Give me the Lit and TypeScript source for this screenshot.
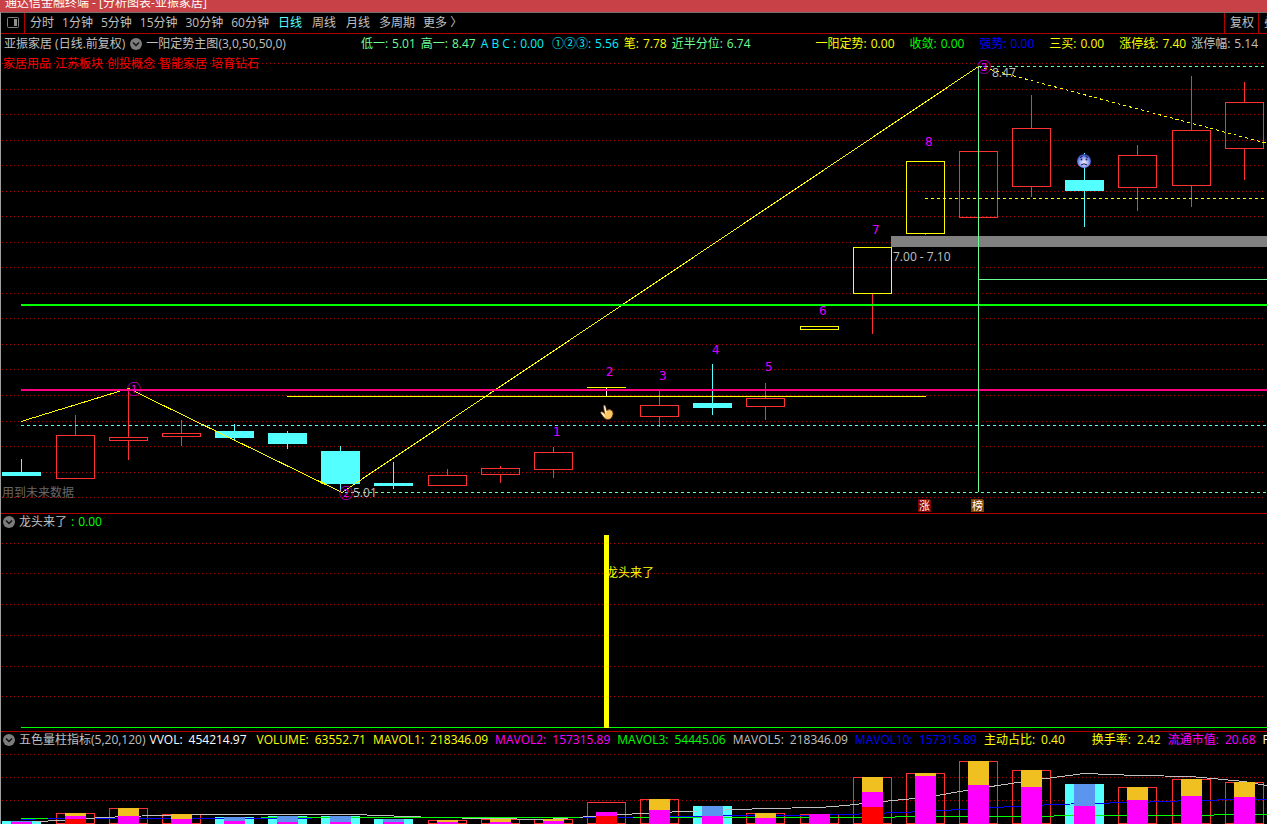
import { LitElement, html, svg, css } from "lit";
import { customElement, property } from "lit/decorators.js";
import { classMap } from "lit/directives/class-map.js";

type Tone = "up" | "down" | "limit";
interface Candle { x: number; tone: Tone; high: number; top: number; bottom: number; low: number; }
interface Volume { x: number; top: number; down?: boolean; mid: number; red?: number; }
interface Field { label: string; value: string; tone: string; gap?: "xs" | "s" | "m" | "l" | "xl"; }

const c = (x: number, tone: Tone, high: number, top: number, bottom: number, low: number): Candle =>
  ({ x, tone, high, top, bottom, low });

const CANDLES: Candle[] = [
  c(21, "down", 459, 472, 476, 476), c(75, "up", 415, 435, 479, 479), c(128, "up", 389, 437, 441, 460),
  c(181, "up", 420, 433, 437, 446), c(234, "down", 424, 431, 438, 440), c(287, "down", 431, 433, 444, 449),
  c(340, "down", 446, 451, 484, 492), c(393, "down", 462, 483, 486, 489), c(447, "up", 469, 475, 486, 486),
  c(500, "up", 466, 468, 475, 483), c(553, "up", 447, 452, 470, 478), c(659, "up", 390, 405, 417, 427),
  c(712, "down", 364, 403, 408, 415), c(765, "up", 383, 398, 407, 420), c(819, "limit", 326, 326, 330, 330),
  c(872, "limit", 247, 247, 294, 334), c(925, "limit", 161, 161, 234, 235), c(978, "up", 151, 151, 218, 218),
  c(1031, "up", 95, 128, 187, 197), c(1084, "down", 153, 180, 191, 227), c(1137, "up", 145, 155, 188, 211),
  c(1191, "up", 76, 130, 186, 207), c(1244, "up", 82, 102, 149, 180),
];

const VOLUMES: Volume[] = [
  { x: 21, top: 821, down: true, mid: 822 }, { x: 75, top: 813, mid: 816, red: 819 },
  { x: 128, top: 808, mid: 816 }, { x: 181, top: 814, mid: 819 },
  { x: 234, top: 817, down: true, mid: 821 }, { x: 287, top: 816, down: true, mid: 822 },
  { x: 340, top: 816, down: true, mid: 822 }, { x: 393, top: 819, down: true, mid: 822 },
  { x: 447, top: 820, mid: 822 }, { x: 500, top: 819, mid: 822 }, { x: 553, top: 819, mid: 821 },
  { x: 606, top: 802, mid: 812, red: 816 }, { x: 659, top: 799, mid: 810 },
  { x: 712, top: 806, down: true, mid: 816 }, { x: 765, top: 813, mid: 818 }, { x: 819, top: 814, mid: 814 },
  { x: 872, top: 777, mid: 792, red: 807 }, { x: 925, top: 773, mid: 776 }, { x: 978, top: 761, mid: 785 },
  { x: 1031, top: 770, mid: 787 }, { x: 1084, top: 784, down: true, mid: 806 }, { x: 1137, top: 787, mid: 800 },
  { x: 1191, top: 779, mid: 796 }, { x: 1244, top: 782, mid: 797 },
];

const MAIN_GRID = [63, 89, 114, 140, 165, 191, 216, 242, 267, 293, 318, 344, 369, 395, 421, 446, 472, 497];
const SIGNAL_GRID = [543, 573, 604, 635, 666, 696];
const VOLUME_GRID = [754, 777, 800];

const COUNTS = [
  [553, 436], [606, 376], [659, 380], [712, 354], [765, 371], [819, 315], [872, 234], [925, 146],
];

const PERIODS = ["分时", "1分钟", "5分钟", "15分钟", "30分钟", "60分钟", "日线", "周线", "月线", "多周期", "更多 〉"];
const TAGS = ["家居用品", "江苏板块", "创投概念", "智能家居", "培育钻石"];

const MAIN_FIELDS: Field[] = [
  { label: "低一:", value: "5.01", tone: "mint", gap: "xl" },
  { label: "高一:", value: "8.47", tone: "mint" },
  { label: "A B C :", value: "0.00", tone: "cyan" },
  { label: "①②③:", value: "5.56", tone: "cyan", gap: "xs" },
  { label: "笔:", value: "7.78", tone: "yellow" },
  { label: "近半分位:", value: "6.74", tone: "mint" },
  { label: "一阳定势:", value: "0.00", tone: "yellow", gap: "l" },
  { label: "收敛:", value: "0.00", tone: "green", gap: "s" },
  { label: "强势:", value: "0.00", tone: "blue", gap: "s" },
  { label: "三买:", value: "0.00", tone: "yellow", gap: "s" },
  { label: "涨停线:", value: "7.40", tone: "yellow", gap: "s" },
  { label: "涨停幅:", value: "5.14", tone: "silver" },
];
const SIGNAL_FIELDS: Field[] = [{ label: ":", value: "0.00", tone: "green" }];
const VOLUME_FIELDS: Field[] = [
  { label: "VVOL:", value: "454214.97", tone: "white" },
  { label: "VOLUME:", value: "63552.71", tone: "yellow", gap: "xs" },
  { label: "MAVOL1:", value: "218346.09", tone: "yellow" },
  { label: "MAVOL2:", value: "157315.89", tone: "magenta" },
  { label: "MAVOL3:", value: "54445.06", tone: "green" },
  { label: "MAVOL5:", value: "218346.09", tone: "silver" },
  { label: "MAVOL10:", value: "157315.89", tone: "blue" },
  { label: "主动占比:", value: "0.40", tone: "yellow" },
  { label: "换手率:", value: "2.42", tone: "yellow", gap: "m" },
  { label: "流通市值:", value: "20.68", tone: "magenta" },
  { label: "PE:", value: "0.00", tone: "white" },
];

const grid = (ys: number[]) =>
  ys.map((y) => svg`<line class="grid" x1="2" x2="100%" y1=${y + 0.5} y2=${y + 0.5} />`);

@customElement("chart-legend")
export class ChartLegend extends LitElement {
  @property() name = "";
  @property() args = "";
  @property({ attribute: false }) fields: Field[] = [];
  @property({ type: Boolean }) stock = false;

  static styles = css`
    :host { display: flex; align-items: center; gap: 4px; height: 16px; padding-left: 2px; overflow: hidden; white-space: nowrap; color: #c0c0c0; }
    :host([stock]) { height: 19px; }
    span { flex: none; }
    button { flex: none; display: block; width: 12px; height: 12px; padding: 0; border: 0; background: none; }
    svg { display: block; }
    .stock { padding: 0 1px; }
    .fields { display: flex; gap: 5px; }
    .field { display: flex; gap: 4px; }
    :host([loose]) .fields { gap: 7px; }
    :host([loose]) .field { gap: 6px; }
    .mint { color: #69ff96; }
    .cyan { color: #00f0ff; }
    .yellow { color: #ff0; }
    .green { color: #0f0; }
    .blue { color: #00f; }
    .magenta { color: #f0f; }
    .silver { color: #c0c0c0; }
    .white { color: #fff; }
    .xs { margin-left: 3px; }
    .s { margin-left: 10px; }
    .m { margin-left: 20px; }
    .l { margin-left: 60px; }
    .xl { margin-left: 71px; }
  `;

  render() {
    return html`
      ${this.stock ? html`<span class="stock">亚振家居 (日线.前复权)</span>` : ""}
      <button aria-label="指标菜单">
        <svg width="12" height="12" viewBox="0 0 12 12">
          <circle cx="6" cy="6" r="6" fill="#7c7c7c" />
          <path d="M3 4.5 L6 7.5 L9 4.5" fill="none" stroke="#101010" stroke-width="1.5" />
        </svg>
      </button>
      <span>${this.name}${this.args}</span>
      <div class="fields">
        ${this.fields.map((f) => html`<span class="field ${f.tone} ${f.gap ?? ""}"><span>${f.label}</span><span>${f.value}</span></span>`)}
      </div>
    `;
  }
}

@customElement("app-root")
export class AppRoot extends LitElement {
  static styles = css`
    :host { display: flex; flex-direction: column; height: 100vh; overflow: hidden; background: #000; color: #c0c0c0;
      font: 12px/18px "Open Sans", "Noto Sans CJK SC", sans-serif; }
    header { display: flex; align-items: flex-end; height: 12px; padding-left: 5px; overflow: hidden; background: #c84146; color: #fff; white-space: nowrap; }
    h1 { margin: 0; font: inherit; }
    main { flex: 1; min-height: 0; display: flex; flex-direction: column; border-top: 1px solid #707070; border-left: 1px solid #a0a0a0; }
    nav { flex: none; display: flex; height: 20px; border-bottom: 1px solid #b00000; white-space: nowrap; }
    button { flex: none; padding: 0; border: 0; background: none; color: inherit; font: inherit; }
    .layout { display: grid; place-items: center; width: 24px; border-right: 1px solid #b00000; box-sizing: border-box; }
    .periods { display: flex; gap: 8px; padding-left: 5px; }
    .wide { padding: 0 1px; }
    .active { color: #54ffff; }
    .tools { display: flex; width: 43px; margin-left: auto; overflow: hidden; }
    .tools button { padding: 0 4px 0 5px; border-left: 1px solid #b00000; }
    section { flex: none; position: relative; display: flex; flex-direction: column; border-bottom: 1px solid #b00000; }
    section.rest { flex: 1; min-height: 0; border: 0; overflow: hidden; }
    .tags { position: absolute; top: 21px; left: 2px; display: flex; gap: 4px; color: #f00; }
    .plot { display: block; width: 100%; shape-rendering: crispEdges; }
    .tall { height: 460px; }
    .short { height: 201px; }
    .rest .plot { flex: 1; min-height: 0; }
    .grid { stroke: #b00000; stroke-dasharray: 1 3; }
    .up { stroke: #ff3232; fill: none; }
    .down { stroke: #54ffff; fill: #54ffff; }
    .limit { stroke: #ff0; fill: none; }
    .line { fill: none; }
    .dash { stroke-dasharray: 3 3; }
    .s-yellow { stroke: #ff0; }
    .s-mint { stroke: #69ff96; }
    .s-cyan { stroke: #54ffff; }
    .s-green { stroke: #0f0; }
    .s-pink { stroke: #ff0080; }
    .s-blue { stroke: #00f; }
    .s-silver { stroke: #c0c0c0; }
    .s-white { stroke: #fff; }
    .thick { stroke-width: 2; }
    .band { fill: #808080; }
    .f-yellow { fill: #ff0; }
    .f-gold { fill: #f0c020; }
    .f-azure { fill: #5a96f0; }
    .f-magenta { fill: #f0f; }
    .f-red { fill: #f00; }
    .f-silver { fill: #c0c0c0; }
    .f-dim { fill: #686868; }
    .count { fill: #e000ff; font-family: "DejaVu Sans", sans-serif; }
    .mark { fill: #e600ff; font-size: 14px; }
    .flag { fill: #fff; font-size: 11px; }
    .smooth { shape-rendering: auto; }
  `;

  private candle(k: Candle) {
    const cx = k.x + 0.5;
    const wick = k.tone === "limit" ? "up" : k.tone;
    return svg`
      ${k.high < k.top ? svg`<line class=${wick} x1=${cx} x2=${cx} y1=${k.high} y2=${k.top} />` : ""}
      ${k.low > k.bottom ? svg`<line class=${wick} x1=${cx} x2=${cx} y1=${k.bottom} y2=${k.low} />` : ""}
      <rect class=${k.tone} x=${k.x - 18.5} y=${k.top + 0.5} width="38" height=${k.bottom - k.top - 1} />`;
  }

  private volumeFrame(v: Volume) {
    return svg`<rect class=${v.down ? "down" : "up"} x=${v.x - 18.5} y=${v.top + 0.5} width="38" height=${823 - v.top} />`;
  }

  private volumeCore(v: Volume) {
    const x = v.x - 10;
    const upper = v.x === 606 ? v.mid : v.top;
    return svg`
      <rect class=${v.down ? "f-azure" : "f-gold"} x=${x} y=${upper} width="21" height=${v.mid - upper} />
      <rect class="f-magenta" x=${x} y=${v.mid} width="21" height=${824 - v.mid} />
      ${v.red ? svg`<rect class="f-red" x=${x} y=${v.red} width="21" height=${824 - v.red} />` : ""}`;
  }

  private mainChart() {
    return html`<svg class="plot tall" role="img" aria-label="日线K线图">
      <defs>
        <radialGradient id="face" cx="50%" cy="60%" r="60%">
          <stop offset="0" stop-color="#f0ecff" /><stop offset="0.45" stop-color="#a8b4fa" /><stop offset="0.75" stop-color="#5a74e0" /><stop offset="1" stop-color="#203090" />
        </radialGradient>
      </defs>
      <g transform="translate(-1 -53)">
        ${grid(MAIN_GRID)}
        <rect class="band" x="891" y="236" width="100%" height="11" />
        ${CANDLES.map((k) => this.candle(k))}
        <line class="s-yellow" x1="587" x2="626" y1="387.5" y2="387.5" />
        <line class="s-white" x1="606.5" x2="606.5" y1="388" y2="396" />
        <line class="s-cyan dash" x1="21" x2="110%" y1="425.5" y2="425.5" />
        <line class="s-mint dash" x1="345" x2="110%" y1="492.5" y2="492.5" />
        <line class="s-mint dash" x1="979" x2="110%" y1="66.5" y2="66.5" />
        <line class="s-yellow dash" x1="925" x2="110%" y1="198.5" y2="198.5" />
        <line class="s-yellow" x1="287" x2="926" y1="396.5" y2="396.5" />
        <polyline class="line s-yellow" points="21,421.5 128.5,388.5 342,492.5 978.5,66.5" />
        <line class="s-yellow dash" x1="978.5" y1="66.5" x2="1267.5" y2="143.5" />
        <line class="s-green thick" x1="21" x2="110%" y1="305" y2="305" />
        <line class="s-pink thick" x1="21" x2="110%" y1="390" y2="390" />
        <line class="s-mint" x1="978.5" x2="978.5" y1="66" y2="492" />
        <line class="s-mint" x1="979" x2="110%" y1="279.5" y2="279.5" />
        <text class="mark" x="127" y="394">①</text>
        <text class="mark" x="339" y="498">②</text>
        <text class="mark" x="977" y="72">③</text>
        <text class="f-silver" x="992" y="77">8.47</text>
        <text class="f-silver" x="353" y="497">5.01</text>
        <text class="f-silver" x="893" y="261">7.00 - 7.10</text>
        <text class="f-dim" x="2" y="497">用到未来数据</text>
        ${COUNTS.map(([x, y], i) => svg`<text class="count" x=${x} y=${y}>${i + 1}</text>`)}
        <path d="M918 499 h11 l2 2 v11 h-13z" fill="#800000" />
        <text class="flag" x="919" y="510">涨</text>
        <path d="M971 499 h11 l2 2 v11 h-13z" fill="#804000" />
        <text class="flag" x="972" y="510">榜</text>
        <g class="smooth">
          <circle cx="1084" cy="161" r="7" fill="url(#face)" />
          <path d="M1080 157.5 l2.5 -1 M1088 157.5 l-2.5 -1 M1081 165 q3 -2.500 6 0" fill="none" stroke="#181840" stroke-width="1" />
          <circle cx="1081.500" cy="159.500" r="0.900" fill="#181840" /><circle cx="1086.500" cy="159.500" r="0.900" fill="#181840" />
          <path d="M603.500 405.500 q1.500 -1.500 2 1 l1 4 q3 -2 6 0.500 q1.500 3 -0.500 6 q-1 2.500 -4 2.500 q-3 0.200 -4.500 -2.500 l-3 -4.500 q0.500 -1.500 3 0 l1 1z" fill="#ffc864" stroke="#6a3a10" stroke-width="0.800" />
          <path d="M604.500 406.500 l1.500 6 M601.500 412.500 l3 4" stroke="#fff" stroke-width="1.200" />
        </g>
      </g>
    </svg>`;
  }

  private signalChart() {
    return html`<svg class="plot short" role="img" aria-label="龙头信号图">
      <g transform="translate(-1 -530)">
        ${grid(SIGNAL_GRID)}
        <line class="s-green" x1="21" x2="110%" y1="727.5" y2="727.5" />
        <rect class="f-yellow" x="604" y="535" width="5" height="193" />
        <text class="f-yellow" x="606" y="577">龙头来了</text>
      </g>
    </svg>`;
  }

  private volumeChart() {
    return html`<svg class="plot" role="img" aria-label="成交量图">
      <g transform="translate(-1 -748)">
        ${grid(VOLUME_GRID)}
        ${VOLUMES.map((v) => this.volumeFrame(v))}
        <polyline class="line s-blue" points="21,819.5 50,818.5 580,817.5 640,817.5 740,815.5 792,815.5 846,814.5 925,811.5 978,808.5 1031,805.5 1084,803.5 1137,802.5 1191,800.5 1244,799.5 1300,799.5" />
        <polyline class="line s-silver" points="35,821.5 62,820.5 102,817.5 155,815.5 208,814.5 354,814.5 380,815.5 434,817.5 545,819.5 606,815.5 659,812.5 712,810.5 765,808.5 819,807.5 846,805.5 872,802.5 925,797.5 978,788.5 1031,780.5 1084,773.5 1137,775.5 1191,776.5 1244,781.5 1267,785.5" />
        <path class="line s-green" d="M21 818.500 H48 M261 817.500 H580 M633 817.500 H890 L900 816.500 H1050 L1058 815.500 H1210 L1218 814.500 H1300" />
        ${VOLUMES.map((v) => this.volumeCore(v))}
      </g>
    </svg>`;
  }

  render() {
    return html`
      <header><h1>通达信金融终端 - [分析图表-亚振家居]</h1></header>
      <main>
        <nav>
          <button class="layout" aria-label="布局">
            <svg width="12" height="12" viewBox="0 0 12 12">
              <rect x="0.500" y="0.500" width="11" height="10" rx="1" fill="none" stroke="#808080" />
              <rect x="7" y="2" width="3" height="7" fill="#909090" />
            </svg>
          </button>
          <div class="periods">
            ${PERIODS.map((p, i) => html`<button class=${classMap({ wide: i > 5 && i < 9, active: p === "日线" })}>${p}</button>`)}
          </div>
          <div class="tools"><button>复权</button><button>叠加</button></div>
        </nav>
        <section>
          <chart-legend stock name="一阳定势主图" args="(3,0,50,50,0)" .fields=${MAIN_FIELDS}></chart-legend>
          ${this.mainChart()}
          <div class="tags">${TAGS.map((t) => html`<span>${t}</span>`)}</div>
        </section>
        <section>
          <chart-legend name="龙头来了" .fields=${SIGNAL_FIELDS}></chart-legend>
          ${this.signalChart()}
        </section>
        <section class="rest">
          <chart-legend loose name="五色量柱指标" args="(5,20,120)" .fields=${VOLUME_FIELDS}></chart-legend>
          ${this.volumeChart()}
        </section>
      </main>
    `;
  }
}
